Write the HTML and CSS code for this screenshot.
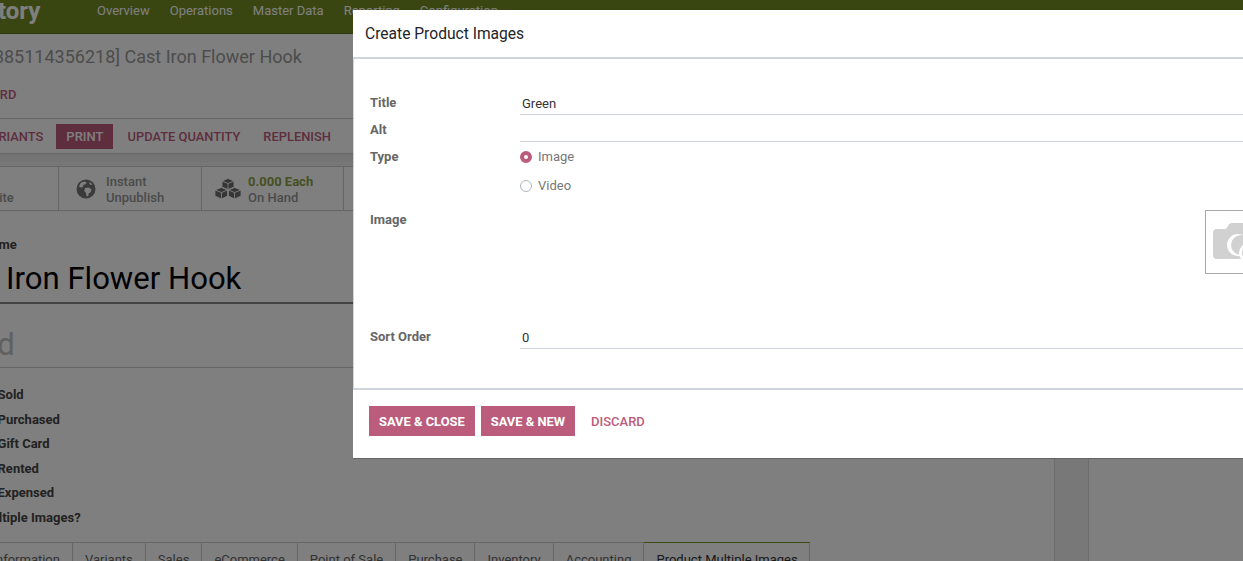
FILE: index.html
```html
<!DOCTYPE html>
<html lang="en">
<head>
<meta charset="utf-8">
<title>Create Product Images</title>
<link rel="stylesheet" href="styles.css">
</head>
<body>
<div class="stage">
  <header class="navbar">
    <div class="brand">Inventory</div>
    <nav class="menu">
      <span>Overview</span><span>Operations</span><span>Master Data</span><span>Reporting</span><span>Configuration</span>
    </nav>
  </header>
  <div class="crumbs">[8385114356218] Cast Iron Flower Hook</div>
  <div class="edit-row"><span class="link">DISCARD</span></div>
  <div class="action-row">
    <span class="link pad">VARIANTS</span>
    <span class="print">PRINT</span>
    <span class="link pad">UPDATE QUANTITY</span>
    <span class="link pad">REPLENISH</span>
  </div>
  <div class="workspace">
    <main class="sheet">
      <div class="stats">
        <div class="stat first"><div class="stat-text"><span>Go to</span><span>Website</span></div></div>
        <div class="stat">
          <svg class="stat-icon globe" viewBox="0 0 20 20" aria-hidden="true">
            <circle cx="10" cy="10" r="9.500" fill="#777"/>
            <path fill="#fff" d="M5 3.500l4-1 1.500 1.200-1 1.600-2 .4-.6 2-1.800 1L3 7.200zM9 9l3.500-.4 3 1.600-.8 3-2 1.300-.6 3-1.600-.4-.6-3.400-1.700-1.600zM14 3l2.200 2.400-1.400.6-1.600-1.300z"/>
          </svg>
          <div class="stat-text"><span>Instant</span><span>Unpublish</span></div>
        </div>
        <div class="stat">
          <svg class="stat-icon cubes" viewBox="0 0 28 22" aria-hidden="true">
            <g fill="#6c6c6c" stroke="#fff" stroke-width=".8" stroke-linejoin="round">
              <path d="M14 .5l6 2.500v6l-6 2.500-6-2.500v-6z"/>
              <path d="M7.500 9.500l6 2.500v6l-6 3-6.500-3v-6z"/>
              <path d="M20.500 9.500l6.500 2.500v6l-6.500 3-6-3v-6z"/>
            </g>
            <g fill="none" stroke="#fff" stroke-width=".9">
              <path d="M8 3l6 2.500L20 3M14 5.500v6"/>
              <path d="M1 12l6.500 2.500 6-2.500M7.500 14.500v6.500"/>
              <path d="M14.500 12l6 2.500 6.500-2.500M20.500 14.500v6.500"/>
            </g>
          </svg>
          <div class="stat-text"><span class="green">0.000 Each</span><span>On Hand</span></div>
        </div>
        <div class="stat"></div>
      </div>
      <div class="form-head">
        <div class="name-label">Product Name</div>
        <div class="name-input">Cast Iron Flower Hook</div>
        <div class="brand-input">Brand</div>
      </div>
      <ul class="flags">
        <li>Can be Sold</li>
        <li>Can be Purchased</li>
        <li>Can be Gift Card</li>
        <li>Can be Rented</li>
        <li>Can be Expensed</li>
        <li>Has Multiple Images?</li>
      </ul>
      <div class="tabs">
        <span>General Information</span><span>Variants</span><span>Sales</span><span>eCommerce</span><span>Point of Sale</span><span>Purchase</span><span>Inventory</span><span>Accounting</span><span class="active">Product Multiple Images</span>
      </div>
    </main>
    <aside class="chatter"></aside>
  </div>
</div>
<div class="backdrop"></div>
<section class="modal">
  <h1 class="modal-title">Create Product Images</h1>
  <div class="modal-body">
    <div class="row"><label class="field-label">Title</label><div class="value underlined">Green</div></div>
    <div class="row"><label class="field-label">Alt</label><div class="value underlined"></div></div>
    <div class="row type-row">
      <label class="field-label">Type</label>
      <div class="radios">
        <div class="radio on">Image</div>
        <div class="radio">Video</div>
      </div>
    </div>
    <div class="row image-row">
      <label class="field-label">Image</label>
      <div class="image-box">
        <svg viewBox="0 0 62 62" width="62" height="62" aria-hidden="true">
          <path fill="#d1d1d1" d="M11 18h9l2-3q1-3 4-3h18q3 0 4 3l2 3h6q4 0 4 4v22q0 4-4 4H11q-4 0-4-4V22q0-4 4-4z"/>
          <circle cx="32" cy="34" r="11" fill="#fff"/>
          <circle cx="35" cy="34" r="10" fill="#d1d1d1"/>
          <circle cx="43" cy="42" r="10" fill="#fff"/>
          <circle cx="43" cy="42" r="7" fill="#d1d1d1"/>
          <circle cx="43" cy="42" r="4.500" fill="#fff"/>
          <rect x="39" y="41" width="8" height="2" fill="#d1d1d1"/>
        </svg>
      </div>
    </div>
    <div class="row sort-row"><label class="field-label">Sort Order</label><div class="value underlined">0</div></div>
  </div>
  <footer class="modal-foot">
    <button class="btn primary" type="button">SAVE &amp; CLOSE</button>
    <button class="btn primary" type="button">SAVE &amp; NEW</button>
    <button class="btn plain" type="button">DISCARD</button>
  </footer>
</section>
</body>
</html>
```
FILE: styles.css
```css
*, *::before { box-sizing: border-box; }
html, body { margin: 0; height: 561px; overflow: hidden; }
body { position: relative; width: 1243px; background: #fff; font: 13px/1.4 Roboto, "Liberation Sans", sans-serif; color: #666; }

.stage { width: 1343px; height: 561px; margin-left: -100px; display: flex; flex-direction: column; overflow: hidden; }

.navbar { flex: none; height: 34px; display: flex; align-items: flex-start; background: #738d24; border-bottom: 1px solid #5a7018; color: #fff; }
.brand { width: 197px; padding-left: 39px; font-size: 24px; line-height: 22px; font-weight: 700; color: #fff; }
.menu { display: flex; gap: 20px; font-size: 13px; line-height: 21px; color: #fff; }

.crumbs { flex: none; height: 46px; padding: 12px 0 0 79px; font-size: 18px; line-height: 22px; color: #999; }

.edit-row { flex: none; height: 39px; padding: 7px 0 0 63px; border-bottom: 1px solid #ccc; line-height: 16px; }
.link { color: #bc5c7c; font-weight: 500; font-size: 12.900px; }

.action-row { flex: none; height: 35px; padding: 5px 0 0 72px; display: flex; gap: 3px; align-items: flex-start; border-bottom: 1px solid #ccc; }
.pad { height: 25px; padding: 0 10px; line-height: 25px; }
.print { height: 25px; margin-right: 1px; padding: 0 10px; line-height: 25px; background: #bc5c7c; color: #fff; font-weight: 500; }

.workspace { flex: 1; display: flex; min-height: 0; background: linear-gradient(#e2e2e2, #f1f1f1 12px); padding-top: 12px; }
.sheet { width: 1155px; height: 395px; flex: none; background: #fff; border-right: 1px solid #d8d8d8; border-top: 1px solid #ccc; overflow: hidden; }
.chatter { margin-left: 33px; flex: 1; margin-top: -12px; background: #fff; border-left: 1px solid #d8d8d8; }

.stats { height: 44px; display: grid; grid-template-columns: 159px 143px 142px 143px; border-bottom: 1px solid #ccc; }
.stat { display: flex; align-items: center; padding: 2px 0 0 17px; border-right: 1px solid #ccc; }
.stat.first { padding-left: 67px; }
.stat-text { display: flex; flex-direction: column; font-size: 13px; line-height: 16px; font-weight: 500; color: #959595; }
.stat-icon { flex: none; position: relative; top: -1px; }
.globe { width: 20px; height: 20px; margin-right: 10px; }
.cubes { width: 28px; height: 22px; margin: 0 6px 0 -5px; }
.green { color: #8da23e; font-weight: 700; }

.form-head { padding: 26px 0 0; }
.name-label { padding-left: 33px; font-weight: 700; line-height: 15px; color: #444; }
.name-input { margin-top: 6px; height: 46px; padding-left: 35px; font-size: 31.100px; line-height: 42px; color: #000; border-bottom: 2px solid #888; }
.brand-input { height: 64px; padding: 21px 0 0 34px; font-size: 31px; line-height: 40px; color: #c0c0c0; border-bottom: 1px solid #ccc; }

.flags { list-style: none; margin: 15px 0 0; padding: 0 0 0 54px; }
.flags li { height: 24.500px; line-height: 24px; font-weight: 700; color: #444; }

.tabs { display: flex; margin: 12px 0 0 32px; height: 40px; }
.tabs span { padding: 8px 12px 0; border: 1px solid #ccc; border-left-width: 0; color: #666; }
.tabs span:first-child { border-left-width: 1px; }
.tabs .active { padding-right: 11px; border-top-color: #76941f; color: #333; }

.backdrop { position: absolute; inset: 0; background: rgba(0, 0, 0, .5); }

.modal { position: absolute; left: 353px; top: 10px; width: 1000px; height: 449px; background: #fff; border-bottom: 1px solid #666; display: flex; flex-direction: column; }
.modal-title { flex: none; height: 47px; margin: 0; padding: 1px 12px 0; font-size: 15.600px; font-weight: 400; line-height: 46px; color: #212529; }
.modal-body { flex: none; height: 333px; padding: 32px 0 0 16px; border: 1px solid #ced4da; border-width: 2px 0 2px 1px; }
.row { display: grid; grid-template-columns: 150px 1fr; }
.field-label { padding-top: 3px; font-weight: 700; color: #666; line-height: 18px; }
.row:nth-child(-n+2) { height: 27px; }
.value { height: 24px; padding: 3px 0 0 2px; color: #333; line-height: 20px; }
.underlined { border-bottom: 1px solid #ced4da; }
.type-row { height: 63px; }
.radios { display: flex; flex-direction: column; gap: 11px; padding-top: 3px; }
.radio { display: flex; align-items: center; gap: 6px; height: 18px; color: #777; }
.radio::before { content: ""; flex: none; width: 12px; height: 12px; border-radius: 50%; border: 1px solid #adb5bd; background: #fff; }
.radio.on::before { border: 4px solid #bc5c7c; }
.image-row { height: 117px; }
.image-box { width: 64px; height: 64px; margin: 2px 0 0 685px; border: 1px solid #aaa; }
.image-box svg { display: block; }
.sort-row { height: 40px; }

.modal-foot { flex: 1; display: flex; align-items: flex-start; gap: 6px; padding: 16px 0 0 16px; }
.btn { height: 30px; padding: 1px 10px 0; border: 0; font: 700 12.900px/29px Roboto, "Liberation Sans", sans-serif; cursor: pointer; }
.primary { background: #bc5c7c; color: #fff; }
.plain { background: none; color: #bc5c7c; font-weight: 500; font-size: 13px; }
```
